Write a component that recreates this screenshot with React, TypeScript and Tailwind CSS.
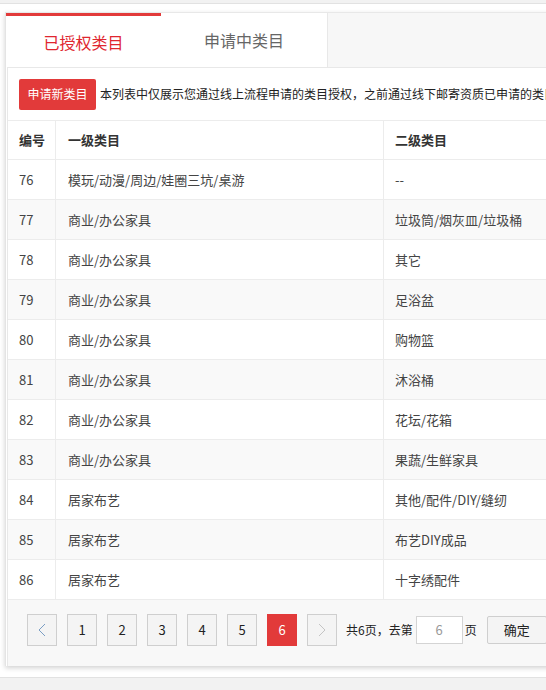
import React from "react";

type Row = { id: number; first: string; second: string };

const rows: Row[] = [
  { id: 76, first: "模玩/动漫/周边/娃圈三坑/桌游", second: "--" },
  { id: 77, first: "商业/办公家具", second: "垃圾筒/烟灰皿/垃圾桶" },
  { id: 78, first: "商业/办公家具", second: "其它" },
  { id: 79, first: "商业/办公家具", second: "足浴盆" },
  { id: 80, first: "商业/办公家具", second: "购物篮" },
  { id: 81, first: "商业/办公家具", second: "沐浴桶" },
  { id: 82, first: "商业/办公家具", second: "花坛/花箱" },
  { id: 83, first: "商业/办公家具", second: "果蔬/生鲜家具" },
  { id: 84, first: "居家布艺", second: "其他/配件/DIY/缝纫" },
  { id: 85, first: "居家布艺", second: "布艺DIY成品" },
  { id: 86, first: "居家布艺", second: "十字绣配件" },
];

const pages = [1, 2, 3, 4, 5, 6];

function Chevron({ dir, color }: { dir: "left" | "right"; color: string }) {
  return (
    <svg width="8" height="14" viewBox="0 0 8 14" fill="none">
      <path
        d={dir === "left" ? "M7 1 L1 7 L7 13" : "M1 1 L7 7 L1 13"}
        stroke={color}
        strokeWidth="1"
      />
    </svg>
  );
}

export default function App() {
  return (
    <div className="h-[690px] w-full overflow-hidden bg-[#f2f2f2] pt-[3px] font-['Noto_Sans_CJK_SC',sans-serif] text-[#333]">
      <div className="h-[675px] border-y border-[#e2e2e2] bg-white pl-[5px] pt-[8px]">
        <div className="w-[600px] border-l border-[#e4e4e4] shadow-[0_2px_5px_rgba(0,0,0,0.18)]">
          {/* tabs */}
          <div className="flex h-[55px] border-t border-[#e8e8e8] bg-[#f7f7f7]">
            <div className="flex w-[155px] items-center justify-center border-t-[3px] border-[#e23a3a] bg-white text-[16px] text-[#e0262f]">
              已授权类目
            </div>
            <div className="flex w-[167px] items-center justify-center border-r border-[#e8e8e8] bg-white text-[16px] text-[#666]">
              申请中类目
            </div>
          </div>

          {/* panel */}
          <div className="ml-px border-l border-t border-[#e8e8e8] bg-white">
            <div className="flex h-[52px] items-center gap-[4px] pl-[11px]">
              <button className="h-[31px] w-[77px] shrink-0 rounded-[2px] bg-[#e23a3a] text-[12px] text-white">
                申请新类目
              </button>
              <span className="whitespace-nowrap text-[12px] text-[#222]">
                本列表中仅展示您通过线上流程申请的类目授权，之前通过线下邮寄资质已申请的类目请联系客服查询
              </span>
            </div>

            {/* table */}
            <div className="flex h-[40px] items-center border-y border-[#ececec] text-[13px] font-bold text-[#333]">
              <div className="flex h-full w-[48px] items-center border-r border-[#ececec] pl-[11px]">编号</div>
              <div className="flex h-full w-[328px] items-center border-r border-[#ececec] pl-[12px]">一级类目</div>
              <div className="flex h-full flex-1 items-center pl-[11px]">二级类目</div>
            </div>
            {rows.map((r, i) => (
              <div
                key={r.id}
                className={`flex h-[40px] items-center border-b border-[#ececec] text-[13px] text-[#444] ${
                  i % 2 === 1 ? "bg-[#f9f9f9]" : "bg-white"
                }`}
              >
                <div className="flex h-full w-[48px] items-center border-r border-[#ececec] pl-[11px]">{r.id}</div>
                <div className="flex h-full w-[328px] items-center border-r border-[#ececec] pl-[12px]">{r.first}</div>
                <div className="flex h-full flex-1 items-center pl-[11px]">{r.second}</div>
              </div>
            ))}

            {/* pagination */}
            <div className="flex h-[66px] items-start gap-[10px] bg-[#f8f8f8] pl-[19px] pt-[14px] text-[13px]">
              <button className="flex h-[32px] w-[30px] items-center justify-center border border-[#cfcfcf] bg-[#f4f4f4]">
                <Chevron dir="left" color="#7b9ec4" />
              </button>
              {pages.map((p) =>
                p === 6 ? (
                  <button
                    key={p}
                    className="flex h-[32px] w-[30px] items-center justify-center bg-[#e23a3a] text-white"
                  >
                    {p}
                  </button>
                ) : (
                  <button
                    key={p}
                    className="flex h-[32px] w-[30px] items-center justify-center border border-[#cfcfcf] bg-[#f4f4f4] text-[#222]"
                  >
                    {p}
                  </button>
                )
              )}
              <button className="flex h-[32px] w-[30px] items-center justify-center border border-[#cfcfcf] bg-[#f4f4f4]">
                <Chevron dir="right" color="#c4c4c4" />
              </button>
              <div className="flex h-[32px] items-center text-[12px] text-[#222]">
                <span className="-ml-px">共6页，去第</span>
                <div className="ml-[3px] flex h-[28px] w-[47px] items-center justify-center border border-[#d4d4d4] bg-white text-[13px] text-[#999]">
                  6
                </div>
                <span className="ml-[2px]">页</span>
                <button className="ml-[10px] h-[28px] w-[60px] rounded-[2px] border border-[#cfcfcf] bg-[#f4f4f4] text-[13px] text-[#222]">
                  确定
                </button>
              </div>
            </div>
          </div>
        </div>
      </div>
    </div>
  );
}
